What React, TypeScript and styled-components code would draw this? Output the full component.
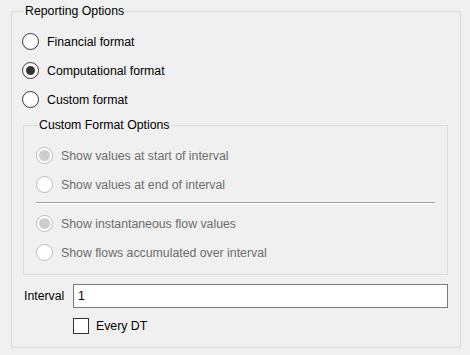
import React from "react";
import styled, { createGlobalStyle } from "styled-components";

const GlobalStyle = createGlobalStyle`
  html, body {
    margin: 0;
    padding: 0;
    background: #f0f0f0;
  }
  body {
    font-family: "Liberation Sans", Arial, sans-serif;
    font-size: 12.3px;
    color: #000;
  }
`;

const Page = styled.div`
  box-sizing: border-box;
  width: 470px;
  height: 355px;
  padding: 4px 9px 0 11px;
`;

const GroupBox = styled.fieldset<{ inner?: boolean }>`
  box-sizing: border-box;
  margin: ${p => (p.inner ? "4px 0 0 1px" : "0")};
  padding: ${p => (p.inner ? "8px 12px 7px 12px" : "8px 12px 13px 10px")};
  border: 1px solid #dcdcdc;
  border-radius: 0;
  min-width: 0;
  display: flex;
  flex-direction: column;
`;

const Legend = styled.legend`
  margin-left: 2px;
  padding: 0 1px;
  line-height: 15px;
`;

const Row = styled.label<{ disabled?: boolean }>`
  display: flex;
  align-items: center;
  height: 29px;
  color: ${p => (p.disabled ? "#6d6d6d" : "#000")};
`;

const Radio = styled.span<{ checked?: boolean; disabled?: boolean }>`
  box-sizing: border-box;
  width: 17px;
  height: 17px;
  margin-right: 8px;
  flex: none;
  border-radius: 50%;
  border: 1px solid ${p => (p.disabled ? "#bcbcbc" : "#333")};
  background: #fff;
  display: flex;
  align-items: center;
  justify-content: center;

  &::after {
    content: "";
    display: ${p => (p.checked ? "block" : "none")};
    width: ${p => (p.disabled ? "11px" : "9px")};
    height: ${p => (p.disabled ? "11px" : "9px")};
    border-radius: 50%;
    background: ${p => (p.disabled ? "#cccccc" : "#333")};
  }
`;

const Separator = styled.div`
  margin: 3px 0 5px;
  height: 1px;
  border-top: 1px solid #a0a0a0;
  background: #fff;
`;

const FieldRow = styled.div`
  display: grid;
  grid-template-columns: 51px 375px;
  align-items: center;
  margin-top: 9px;
`;

const FieldLabel = styled.span`
  padding-left: 2px;
`;

const TextBox = styled.div`
  box-sizing: border-box;
  height: 24px;
  border: 1px solid #7a7a7a;
  background: #fff;
  padding-left: 4px;
  display: flex;
  align-items: center;
`;

const CheckRow = styled.label`
  display: flex;
  align-items: center;
  margin: 10px 0 0 51px;
`;

const CheckBox = styled.span`
  box-sizing: border-box;
  width: 16px;
  height: 16px;
  margin-right: 7px;
  border: 1px solid #333;
  background: #fff;
`;

const RadioRow = ({
  label,
  checked,
  disabled
}: {
  label: string;
  checked?: boolean;
  disabled?: boolean;
}) => (
  <Row disabled={disabled}>
    <Radio checked={checked} disabled={disabled} />
    {label}
  </Row>
);

export default function App() {
  return (
    <>
      <GlobalStyle />
      <Page>
        <GroupBox>
          <Legend>Reporting Options</Legend>
          <RadioRow label="Financial format" />
          <RadioRow label="Computational format" checked />
          <RadioRow label="Custom format" />
          <GroupBox inner>
            <Legend>Custom Format Options</Legend>
            <RadioRow label="Show values at start of interval" checked disabled />
            <RadioRow label="Show values at end of interval" disabled />
            <Separator />
            <RadioRow label="Show instantaneous flow values" checked disabled />
            <RadioRow label="Show flows accumulated over interval" disabled />
          </GroupBox>
          <FieldRow>
            <FieldLabel>Interval</FieldLabel>
            <TextBox>1</TextBox>
          </FieldRow>
          <CheckRow>
            <CheckBox />
            Every DT
          </CheckRow>
        </GroupBox>
      </Page>
    </>
  );
}
